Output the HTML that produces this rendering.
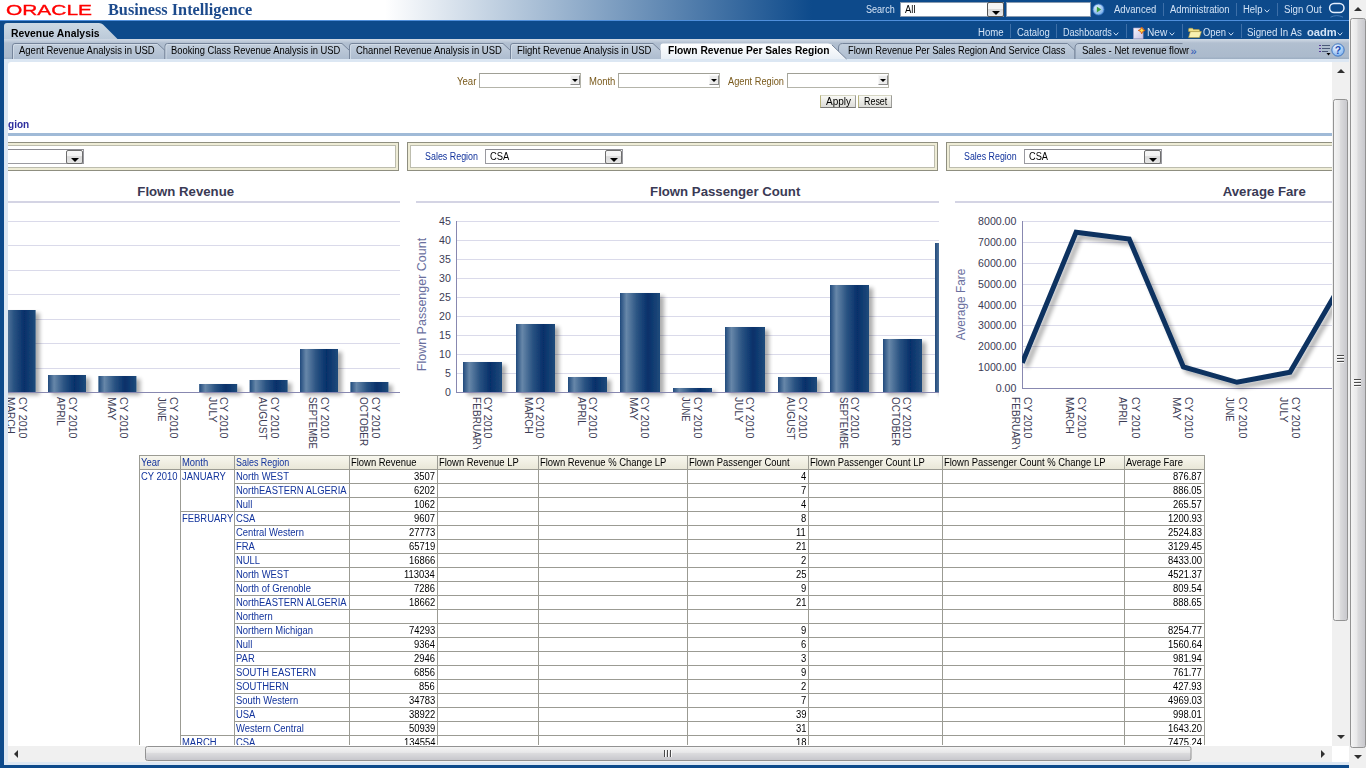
<!DOCTYPE html>
<html><head><meta charset="utf-8"><title>Oracle Business Intelligence</title>
<style>
html,body{margin:0;padding:0;width:1366px;height:768px;overflow:hidden;background:#fff;font:11px "Liberation Sans",sans-serif;}
.t{position:absolute;white-space:pre;transform-origin:0 50%;line-height:normal}
.a{position:absolute}
</style></head><body>
<div class="a" style="left:0;top:0;width:1349px;height:20px;background:linear-gradient(to right,#fff 0,#fff 385px,#0d4a8b 812px)"></div><div class="a" style="left:0;top:20px;width:1349px;height:1px;background:#4f8fdc"></div><div class="a" style="left:0;top:21px;width:1349px;height:18px;background:#0d4a8b"></div><div class="a" style="left:0;top:39px;width:1349px;height:20px;background:linear-gradient(#cfd9e4 0,#c2cedc 10%,#b1bfd0 20%,#abbacc 88%,#9badc1 100%)"></div><div class="a" style="left:0;top:39px;width:4px;height:729px;background:#0d4a8b"></div><div class="a" style="left:0;top:765px;width:1349px;height:3px;background:#0d4a8b"></div><div class="a" style="left:4px;top:59px;width:1345px;height:706px;background:#dce7f3"></div><div class="a" style="left:8px;top:62px;width:1341px;height:700px;background:#fff;border-top-left-radius:3px"></div><span class="t" style='left:6.1px;top:1.7px;font:14.6px "Liberation Sans",sans-serif;color:#f00;transform:scaleX(1.4330);-webkit-text-stroke:0.35px #f00;'>ORACLE</span><span class="t" style='left:108.3px;top:0.5px;font:bold 16px "Liberation Serif",serif;color:#1c4a8c;transform:scaleX(1.0169);'>Business Intelligence</span><span class="t" style='left:865.8px;top:3.8px;font:10px "Liberation Sans",sans-serif;color:#d3e3f6;transform:scaleX(0.9057);'>Search</span><div class="a" style="left:900px;top:2px;width:104px;height:15px;background:#fff;border:1px solid #8a9bb0;box-sizing:border-box"></div><span class="t" style='left:904.5px;top:3.8px;font:10px "Liberation Sans",sans-serif;color:#000;transform:scaleX(0.9430);'>All</span><div class="a" style="left:987px;top:2px;width:17px;height:15px;box-sizing:border-box;border:1px solid #555;border-radius:2px;background:linear-gradient(#f4f4f4 0,#f4f4f4 45%,#d8d8d8 46%,#e8e8e8)"></div><div class="a" style="left:992px;top:11px;width:0;height:0;border-left:4px solid transparent;border-right:4px solid transparent;border-top:4px solid #000"></div><div class="a" style="left:1006px;top:2px;width:85px;height:15px;background:#fff;border:1px solid #8a9bb0;box-sizing:border-box"></div><svg class="a" style="left:1092px;top:3px" width="13" height="13" viewBox="0 0 13 13"><defs><radialGradient id="gg" cx=".4" cy=".35" r=".7"><stop offset="0" stop-color="#e8f4ff"/><stop offset="1" stop-color="#6aa5e6"/></radialGradient></defs><circle cx="6.5" cy="6.5" r="5.6" fill="url(#gg)" stroke="#2f6fc0" stroke-width=".8"/><path d="M4.8 3.4 L9.2 6.5 L4.8 9.6Z" fill="#3aa040"/></svg><span class="t" style='left:1114.0px;top:3.8px;font:10px "Liberation Sans",sans-serif;color:#d3e3f6;transform:scaleX(0.9486);'>Advanced</span><span class="t" style='left:1170.0px;top:3.8px;font:10px "Liberation Sans",sans-serif;color:#d3e3f6;transform:scaleX(0.9391);'>Administration</span><span class="t" style='left:1242.5px;top:3.8px;font:10px "Liberation Sans",sans-serif;color:#d3e3f6;transform:scaleX(0.9476);'>Help</span><span class="t" style='left:1283.5px;top:3.8px;font:10px "Liberation Sans",sans-serif;color:#d3e3f6;transform:scaleX(0.9686);'>Sign Out</span><div class="a" style="left:1162.5px;top:3px;width:1px;height:13px;background:#3d6fa8"></div><div class="a" style="left:1236px;top:3px;width:1px;height:13px;background:#3d6fa8"></div><div class="a" style="left:1277px;top:3px;width:1px;height:13px;background:#3d6fa8"></div><svg class="a" style="left:1264.0px;top:9.4px" width="7" height="5" viewBox="0 0 7 5"><path d="M.7 .6 L3 3.2 L5.3 .6" fill="none" stroke="#c9dcf2" stroke-width="1"/></svg><svg class="a" style="left:1327px;top:1px" width="20" height="19" viewBox="0 0 20 19"><rect x="2.6" y="2.6" width="14.4" height="8.8" rx="4.4" fill="none" stroke="#e6f0ff" stroke-width="1.5"/><path d="M3.5 16.2 Q9.8 13 16 16.2" fill="none" stroke="#5f8fc8" stroke-width="1" opacity=".7"/></svg><span class="t" style='left:977.9px;top:26.8px;font:10px "Liberation Sans",sans-serif;color:#d3e3f6;transform:scaleX(0.9593);'>Home</span><span class="t" style='left:1016.7px;top:26.8px;font:10px "Liberation Sans",sans-serif;color:#d3e3f6;transform:scaleX(0.9516);'>Catalog</span><span class="t" style='left:1062.7px;top:26.8px;font:10px "Liberation Sans",sans-serif;color:#d3e3f6;transform:scaleX(0.9050);'>Dashboards</span><svg class="a" style="left:1113.0px;top:32.4px" width="7" height="5" viewBox="0 0 7 5"><path d="M.7 .6 L3 3.2 L5.3 .6" fill="none" stroke="#c9dcf2" stroke-width="1"/></svg><span class="t" style='left:1146.7px;top:26.8px;font:10px "Liberation Sans",sans-serif;color:#d3e3f6;transform:scaleX(1.0142);'>New</span><svg class="a" style="left:1169.0px;top:32.4px" width="7" height="5" viewBox="0 0 7 5"><path d="M.7 .6 L3 3.2 L5.3 .6" fill="none" stroke="#c9dcf2" stroke-width="1"/></svg><span class="t" style='left:1202.5px;top:26.8px;font:10px "Liberation Sans",sans-serif;color:#d3e3f6;transform:scaleX(0.9400);'>Open</span><svg class="a" style="left:1227.5px;top:32.4px" width="7" height="5" viewBox="0 0 7 5"><path d="M.7 .6 L3 3.2 L5.3 .6" fill="none" stroke="#c9dcf2" stroke-width="1"/></svg><span class="t" style='left:1247.2px;top:26.8px;font:10px "Liberation Sans",sans-serif;color:#d3e3f6;transform:scaleX(0.9758);'>Signed In As</span><span class="t" style='left:1307.2px;top:26.8px;font:bold 10px "Liberation Sans",sans-serif;color:#d3e3f6;transform:scaleX(1.1173);'>oadm</span><svg class="a" style="left:1337.2px;top:32.4px" width="7" height="5" viewBox="0 0 7 5"><path d="M.7 .6 L3 3.2 L5.3 .6" fill="none" stroke="#c9dcf2" stroke-width="1"/></svg><div class="a" style="left:1010px;top:24px;width:1px;height:14px;background:#3d6fa8"></div><div class="a" style="left:1056px;top:24px;width:1px;height:14px;background:#3d6fa8"></div><div class="a" style="left:1126px;top:24px;width:1px;height:14px;background:#3d6fa8"></div><div class="a" style="left:1182px;top:24px;width:1px;height:14px;background:#3d6fa8"></div><div class="a" style="left:1241px;top:24px;width:1px;height:14px;background:#3d6fa8"></div><svg class="a" style="left:1132px;top:26px" width="14" height="14" viewBox="0 0 14 14"><defs><linearGradient id="pg" x1="0" y1="0" x2="1" y2="1"><stop offset="0" stop-color="#f6f4fc"/><stop offset="1" stop-color="#c9c2e2"/></linearGradient></defs><path d="M1.5 2h9.6v10.8h-9.6z" fill="url(#pg)" stroke="#a8a0c8" stroke-width=".6"/><path d="M9.7 1l1.05 2.35 2.35 1.05-2.35 1.05L9.7 7.8 8.65 5.45 6.3 4.4l2.35-1.05z" fill="#ffe24a" stroke="#d2520e" stroke-width=".9" stroke-linejoin="round"/></svg><svg class="a" style="left:1188px;top:27px" width="14" height="12" viewBox="0 0 14 12"><path d="M.6 2.2q0-.9.9-.9h3l1 1.2h5.2q.8 0 .8.8v1.2H.6z" fill="#efe08a" stroke="#b9a040" stroke-width=".6"/><path d="M.6 10.6l1.8-6h11l-2 6z" fill="#f8f0b0" stroke="#b9a040" stroke-width=".6"/></svg><svg class="a" style="left:0;top:21px" width="1349" height="42" viewBox="0 0 1349 42"><defs><linearGradient id="mt" x1="0" y1="0" x2="0" y2="1"><stop offset="0" stop-color="#ccd9e4"/><stop offset="1" stop-color="#bccad9"/></linearGradient><linearGradient id="st" x1="0" y1="0" x2="0" y2="1"><stop offset="0" stop-color="#c3cfdd"/><stop offset="1" stop-color="#adbccf"/></linearGradient><linearGradient id="at" x1="0" y1="0" x2="0" y2="1"><stop offset="0" stop-color="#ffffff"/><stop offset="1" stop-color="#e9eff6"/></linearGradient></defs><path d="M4 18 V5 Q4 2 7 2 H99 Q101.5 2 103 3.5 L117.5 18Z" fill="url(#mt)"/><path d="M12.5 38 V25 Q12.5 22.5 15.0 22.5 H157.5 L165 29.5 V38" fill="url(#st)" stroke="#76859b" stroke-width="1"/><path d="M13.5 38 V25.5 Q13.5 23.5 15.5 23.5 H157" fill="none" stroke="#d5deea" stroke-width="1" opacity=".8"/><path d="M165 38 V25 Q165 22.5 167.5 22.5 H342.0 L349.5 29.5 V38" fill="url(#st)" stroke="#76859b" stroke-width="1"/><path d="M166 38 V25.5 Q166 23.5 168 23.5 H341.5" fill="none" stroke="#d5deea" stroke-width="1" opacity=".8"/><path d="M349.5 38 V25 Q349.5 22.5 352.0 22.5 H503.0 L510.5 29.5 V38" fill="url(#st)" stroke="#76859b" stroke-width="1"/><path d="M350.5 38 V25.5 Q350.5 23.5 352.5 23.5 H502.5" fill="none" stroke="#d5deea" stroke-width="1" opacity=".8"/><path d="M510.5 38 V25 Q510.5 22.5 513.0 22.5 H653.0 L660.5 29.5 V38" fill="url(#st)" stroke="#76859b" stroke-width="1"/><path d="M511.5 38 V25.5 Q511.5 23.5 513.5 23.5 H652.5" fill="none" stroke="#d5deea" stroke-width="1" opacity=".8"/><path d="M838.5 38 V27 Q838.5 22.5 842.5 22.5 H1067.5 L1075 29.5 V38" fill="url(#st)" stroke="#76859b" stroke-width="1"/><path d="M1075 38 V27 Q1075 22.5 1079 22.5 H1182.5" fill="url(#st)" stroke="#76859b" stroke-width="1"/><path d="M660.5 38 V25 Q660.5 22.5 663 22.5 H828 Q830.5 22.5 832 24 L846.5 38Z" fill="url(#at)"/><path d="M832 24 L846.5 38" stroke="#76859b" stroke-width="1" fill="none"/></svg><span class="t" style='left:10.9px;top:27.8px;font:bold 10px "Liberation Sans",sans-serif;color:#000;transform:scaleX(1.0395);'>Revenue Analysis</span><span class="t" style='left:19.3px;top:45.3px;font:10px "Liberation Sans",sans-serif;color:#000;transform:scaleX(0.9499);'>Agent Revenue Analysis in USD</span><span class="t" style='left:170.6px;top:45.3px;font:10px "Liberation Sans",sans-serif;color:#000;transform:scaleX(0.9377);'>Booking Class Revenue Analysis in USD</span><span class="t" style='left:355.7px;top:45.3px;font:10px "Liberation Sans",sans-serif;color:#000;transform:scaleX(0.9468);'>Channel Revenue Analysis in USD</span><span class="t" style='left:517.0px;top:45.3px;font:10px "Liberation Sans",sans-serif;color:#000;transform:scaleX(0.9526);'>Flight Revenue Analysis in USD</span><span class="t" style='left:667.5px;top:45.3px;font:bold 10px "Liberation Sans",sans-serif;color:#000;transform:scaleX(1.0239);'>Flown Revenue Per Sales Region</span><span class="t" style='left:848.1px;top:45.3px;font:10px "Liberation Sans",sans-serif;color:#000;transform:scaleX(0.9290);'>Flown Revenue Per Sales Region And Service Class</span><span class="t" style='left:1081.5px;top:45.3px;font:10px "Liberation Sans",sans-serif;color:#000;transform:scaleX(0.9556);'>Sales - Net revenue flowr</span><span class="t" style='left:1190.5px;top:44.5px;font:11px "Liberation Sans",sans-serif;color:#2a55b5'>»</span><svg class="a" style="left:1319px;top:43px" width="12" height="13" viewBox="0 0 12 13"><g stroke="#4a5a78" stroke-width="1"><path d="M3 2.5h8M3 5.5h8M3 8.5h6"/></g><g fill="#5a3a9a"><rect x="0" y="2" width="2" height="1"/><rect x="0" y="5" width="2" height="1"/><rect x="0" y="8" width="2" height="1"/></g><path d="M7.5 10h4l-2 2.5z" fill="#000"/></svg><svg class="a" style="left:1331px;top:43px" width="14" height="14" viewBox="0 0 14 14"><defs><radialGradient id="hg" cx=".4" cy=".3" r=".8"><stop offset="0" stop-color="#f2f8ff"/><stop offset="1" stop-color="#6fa9ee"/></radialGradient></defs><circle cx="7" cy="7" r="6.2" fill="url(#hg)" stroke="#2b66b8" stroke-width=".8"/><text x="7" y="10.6" text-anchor="middle" font-family="Liberation Sans, sans-serif" font-weight="bold" font-size="10.5" fill="#1b4db3">?</text></svg><div class="a" style="left:8px;top:62px;width:1324px;height:683px;overflow:hidden"><div class="a" style="left:-8px;top:-62px;width:1366px;height:768px"><span class="t" style='left:456.8px;top:75.8px;font:10px "Liberation Sans",sans-serif;color:#7a5a1c;transform:scaleX(0.9595);'>Year</span><div class="a" style="left:479px;top:73px;width:102px;height:15px;box-sizing:border-box;background:#fff;border:1px solid #b4b4aa;border-top-color:#a0a096;border-left-color:#a8a89e"></div><div class="a" style="left:570px;top:75px;width:10px;height:10px;box-sizing:border-box;background:#ececec;border:1px solid #f8f8f8;border-right-color:#8c8c8c;border-bottom-color:#8c8c8c"></div><div class="a" style="left:572px;top:79px;width:0;height:0;border-left:3px solid transparent;border-right:3px solid transparent;border-top:3px solid #000"></div><span class="t" style='left:588.7px;top:75.8px;font:10px "Liberation Sans",sans-serif;color:#7a5a1c;transform:scaleX(0.9497);'>Month</span><div class="a" style="left:618px;top:73px;width:102px;height:15px;box-sizing:border-box;background:#fff;border:1px solid #b4b4aa;border-top-color:#a0a096;border-left-color:#a8a89e"></div><div class="a" style="left:709px;top:75px;width:10px;height:10px;box-sizing:border-box;background:#ececec;border:1px solid #f8f8f8;border-right-color:#8c8c8c;border-bottom-color:#8c8c8c"></div><div class="a" style="left:711px;top:79px;width:0;height:0;border-left:3px solid transparent;border-right:3px solid transparent;border-top:3px solid #000"></div><span class="t" style='left:728.4px;top:75.8px;font:10px "Liberation Sans",sans-serif;color:#7a5a1c;transform:scaleX(0.9239);'>Agent Region</span><div class="a" style="left:787px;top:73px;width:102px;height:15px;box-sizing:border-box;background:#fff;border:1px solid #b4b4aa;border-top-color:#a0a096;border-left-color:#a8a89e"></div><div class="a" style="left:878px;top:75px;width:10px;height:10px;box-sizing:border-box;background:#ececec;border:1px solid #f8f8f8;border-right-color:#8c8c8c;border-bottom-color:#8c8c8c"></div><div class="a" style="left:880px;top:79px;width:0;height:0;border-left:3px solid transparent;border-right:3px solid transparent;border-top:3px solid #000"></div><div class="a" style="left:820px;top:95px;width:36px;height:13px;box-sizing:border-box;background:linear-gradient(#f9f9f5,#dcdcd8);border:1px solid #d6d6c4;border-left-color:#b8b47c;border-right-color:#9c9c98;border-bottom-color:#787876"></div><span class="t" style='left:826.1px;top:95.8px;font:10px "Liberation Sans",sans-serif;color:#000;transform:scaleX(1.0034);'>Apply</span><div class="a" style="left:858px;top:95px;width:34px;height:13px;box-sizing:border-box;background:linear-gradient(#f9f9f5,#dcdcd8);border:1px solid #d6d6c4;border-left-color:#b8b47c;border-right-color:#9c9c98;border-bottom-color:#787876"></div><span class="t" style='left:863.9px;top:95.8px;font:10px "Liberation Sans",sans-serif;color:#000;transform:scaleX(0.8919);'>Reset</span><span class="t" style='left:7.9px;top:118.8px;font:bold 10px "Liberation Sans",sans-serif;color:#2d2d9e;transform:scaleX(1.0043);'>gion</span><div class="a" style="left:8px;top:133px;width:1324px;height:3px;background:#a0bad7"></div><div class="a" style="left:-132px;top:142px;width:531px;height:29px;box-sizing:border-box;background:#fff;border:1px solid #8f8f80;box-shadow:inset 0 0 0 2px #eeecd6, inset 0 0 0 3px #bdbdae"></div><div class="a" style="left:407px;top:142px;width:531px;height:29px;box-sizing:border-box;background:#fff;border:1px solid #8f8f80;box-shadow:inset 0 0 0 2px #eeecd6, inset 0 0 0 3px #bdbdae"></div><div class="a" style="left:946px;top:142px;width:531px;height:29px;box-sizing:border-box;background:#fff;border:1px solid #8f8f80;box-shadow:inset 0 0 0 2px #eeecd6, inset 0 0 0 3px #bdbdae"></div><div class="a" style="left:-54px;top:149px;width:138px;height:15px;box-sizing:border-box;background:#fff;border:1px solid #9a9aa0;border-top-color:#8c8c92"></div><div class="a" style="left:66px;top:150px;width:17px;height:14px;box-sizing:border-box;border:1px solid #6e6e6e;border-radius:2px;background:linear-gradient(#f6f6f6 0,#f2f2f2 45%,#dadada 46%,#e6e6e6)"></div><div class="a" style="left:71px;top:158px;width:0;height:0;border-left:4px solid transparent;border-right:4px solid transparent;border-top:4px solid #000"></div><span class="t" style='left:424.5px;top:151.1px;font:10px "Liberation Sans",sans-serif;color:#12339c;transform:scaleX(0.8910);'>Sales Region</span><div class="a" style="left:485px;top:149px;width:138px;height:15px;box-sizing:border-box;background:#fff;border:1px solid #9a9aa0;border-top-color:#8c8c92"></div><div class="a" style="left:605px;top:150px;width:17px;height:14px;box-sizing:border-box;border:1px solid #6e6e6e;border-radius:2px;background:linear-gradient(#f6f6f6 0,#f2f2f2 45%,#dadada 46%,#e6e6e6)"></div><div class="a" style="left:610px;top:158px;width:0;height:0;border-left:4px solid transparent;border-right:4px solid transparent;border-top:4px solid #000"></div><span class="t" style='left:489.8px;top:151.1px;font:10px "Liberation Sans",sans-serif;color:#000;transform:scaleX(0.9386);'>CSA</span><span class="t" style='left:963.9px;top:151.1px;font:10px "Liberation Sans",sans-serif;color:#12339c;transform:scaleX(0.8843);'>Sales Region</span><div class="a" style="left:1024px;top:149px;width:138px;height:15px;box-sizing:border-box;background:#fff;border:1px solid #9a9aa0;border-top-color:#8c8c92"></div><div class="a" style="left:1144px;top:150px;width:17px;height:14px;box-sizing:border-box;border:1px solid #6e6e6e;border-radius:2px;background:linear-gradient(#f6f6f6 0,#f2f2f2 45%,#dadada 46%,#e6e6e6)"></div><div class="a" style="left:1149px;top:158px;width:0;height:0;border-left:4px solid transparent;border-right:4px solid transparent;border-top:4px solid #000"></div><span class="t" style='left:1029.1px;top:151.1px;font:10px "Liberation Sans",sans-serif;color:#000;transform:scaleX(0.9240);'>CSA</span><svg class="a" style="left:0;top:175px;overflow:hidden" width="1366" height="274" viewBox="0 175 1366 274"><defs><linearGradient id="bg" x1="0" y1="0" x2="1" y2="0"><stop offset="0" stop-color="#1f4a7c"/><stop offset=".16" stop-color="#6787a9"/><stop offset=".42" stop-color="#2b5483"/><stop offset=".7" stop-color="#06306a"/><stop offset="1" stop-color="#1f4b7b"/></linearGradient><filter id="sh" x="-20%" y="-20%" width="160%" height="150%"><feGaussianBlur in="SourceAlpha" stdDeviation="2.2"/><feOffset dx="3.5" dy="3"/><feComponentTransfer><feFuncA type="linear" slope=".33"/></feComponentTransfer><feMerge><feMergeNode/><feMergeNode in="SourceGraphic"/></feMerge></filter><filter id="shl" x="-10%" y="-10%" width="130%" height="130%"><feGaussianBlur in="SourceAlpha" stdDeviation="2.2"/><feOffset dx="4" dy="4"/><feComponentTransfer><feFuncA type="linear" slope=".32"/></feComponentTransfer><feMerge><feMergeNode/><feMergeNode in="SourceGraphic"/></feMerge></filter><clipPath id="c1"><rect x="8" y="175" width="392" height="274"/></clipPath><clipPath id="c2"><rect x="416" y="175" width="523" height="274"/></clipPath><clipPath id="c3"><rect x="955" y="175" width="377" height="274"/></clipPath><clipPath id="p2"><rect x="456" y="215" width="483" height="182"/></clipPath><clipPath id="p3"><rect x="1022" y="215" width="320" height="180"/></clipPath></defs><g clip-path="url(#c1)"><text x="185.7" y="196" text-anchor="middle" font-family="Liberation Sans, sans-serif" font-weight="bold" font-size="13.2" fill="#3a3a55">Flown Revenue</text><rect x="-123" y="201" width="523" height="2" fill="#d4d4e4"/><rect x="0" y="368" width="400" height="1" fill="#dadaea"/><rect x="0" y="343" width="400" height="1" fill="#dadaea"/><rect x="0" y="319" width="400" height="1" fill="#dadaea"/><rect x="0" y="294" width="400" height="1" fill="#dadaea"/><rect x="0" y="270" width="400" height="1" fill="#dadaea"/><rect x="0" y="245" width="400" height="1" fill="#dadaea"/><rect x="0" y="221" width="400" height="1" fill="#dadaea"/><g filter="url(#sh)"><rect x="-2.40" y="310.00" width="38.00" height="82.00" fill="url(#bg)"/><rect x="48.00" y="375.00" width="38.00" height="17.00" fill="url(#bg)"/><rect x="98.40" y="376.00" width="38.00" height="16.00" fill="url(#bg)"/><rect x="199.20" y="384.00" width="38.00" height="8.00" fill="url(#bg)"/><rect x="249.60" y="380.00" width="38.00" height="12.00" fill="url(#bg)"/><rect x="300.00" y="349.00" width="38.00" height="43.00" fill="url(#bg)"/><rect x="350.40" y="382.00" width="38.00" height="10.00" fill="url(#bg)"/></g><rect x="0" y="392" width="400" height="1" fill="#8888b0"/><text transform="translate(18.85,397.1) rotate(90)" font-family="Liberation Sans, sans-serif" font-size="11" textLength="41.4" lengthAdjust="spacingAndGlyphs" fill="#3c3c55">CY 2010</text><text transform="translate(6.95,397.1) rotate(90)" font-family="Liberation Sans, sans-serif" font-size="11" textLength="36.7" lengthAdjust="spacingAndGlyphs" fill="#3c3c55">MARCH</text><text transform="translate(69.25,397.1) rotate(90)" font-family="Liberation Sans, sans-serif" font-size="11" textLength="41.4" lengthAdjust="spacingAndGlyphs" fill="#3c3c55">CY 2010</text><text transform="translate(57.35,397.1) rotate(90)" font-family="Liberation Sans, sans-serif" font-size="11" textLength="28.8" lengthAdjust="spacingAndGlyphs" fill="#3c3c55">APRIL</text><text transform="translate(119.65,397.1) rotate(90)" font-family="Liberation Sans, sans-serif" font-size="11" textLength="41.4" lengthAdjust="spacingAndGlyphs" fill="#3c3c55">CY 2010</text><text transform="translate(107.75,397.1) rotate(90)" font-family="Liberation Sans, sans-serif" font-size="11" textLength="23.5" lengthAdjust="spacingAndGlyphs" fill="#3c3c55">MAY</text><text transform="translate(170.05,397.1) rotate(90)" font-family="Liberation Sans, sans-serif" font-size="11" textLength="41.4" lengthAdjust="spacingAndGlyphs" fill="#3c3c55">CY 2010</text><text transform="translate(158.15,397.1) rotate(90)" font-family="Liberation Sans, sans-serif" font-size="11" textLength="24.4" lengthAdjust="spacingAndGlyphs" fill="#3c3c55">JUNE</text><text transform="translate(220.45,397.1) rotate(90)" font-family="Liberation Sans, sans-serif" font-size="11" textLength="41.4" lengthAdjust="spacingAndGlyphs" fill="#3c3c55">CY 2010</text><text transform="translate(208.55,397.1) rotate(90)" font-family="Liberation Sans, sans-serif" font-size="11" textLength="25.6" lengthAdjust="spacingAndGlyphs" fill="#3c3c55">JULY</text><text transform="translate(270.85,397.1) rotate(90)" font-family="Liberation Sans, sans-serif" font-size="11" textLength="41.4" lengthAdjust="spacingAndGlyphs" fill="#3c3c55">CY 2010</text><text transform="translate(258.95,397.1) rotate(90)" font-family="Liberation Sans, sans-serif" font-size="11" textLength="42.8" lengthAdjust="spacingAndGlyphs" fill="#3c3c55">AUGUST</text><text transform="translate(321.25,397.1) rotate(90)" font-family="Liberation Sans, sans-serif" font-size="11" textLength="41.4" lengthAdjust="spacingAndGlyphs" fill="#3c3c55">CY 2010</text><text transform="translate(309.35,397.1) rotate(90)" font-family="Liberation Sans, sans-serif" font-size="11" textLength="51.6" lengthAdjust="spacingAndGlyphs" fill="#3c3c55">SEPTEMBE</text><text transform="translate(371.65,397.1) rotate(90)" font-family="Liberation Sans, sans-serif" font-size="11" textLength="41.4" lengthAdjust="spacingAndGlyphs" fill="#3c3c55">CY 2010</text><text transform="translate(359.75,397.1) rotate(90)" font-family="Liberation Sans, sans-serif" font-size="11" textLength="49" lengthAdjust="spacingAndGlyphs" fill="#3c3c55">OCTOBER</text></g><g clip-path="url(#c2)"><text x="725.2" y="196" text-anchor="middle" font-family="Liberation Sans, sans-serif" font-weight="bold" font-size="13.2" fill="#3a3a55">Flown Passenger Count</text><rect x="416" y="201" width="523" height="2" fill="#d4d4e4"/><text x="450.8" y="395.70" text-anchor="end" font-family="Liberation Sans, sans-serif" font-size="10.6" fill="#3c3c55">0</text><rect x="456" y="373" width="500" height="1" fill="#dadaea"/><text x="450.8" y="376.70" text-anchor="end" font-family="Liberation Sans, sans-serif" font-size="10.6" fill="#3c3c55">5</text><rect x="456" y="354" width="500" height="1" fill="#dadaea"/><text x="450.8" y="357.70" text-anchor="end" font-family="Liberation Sans, sans-serif" font-size="10.6" fill="#3c3c55">10</text><rect x="456" y="335" width="500" height="1" fill="#dadaea"/><text x="450.8" y="338.70" text-anchor="end" font-family="Liberation Sans, sans-serif" font-size="10.6" fill="#3c3c55">15</text><rect x="456" y="316" width="500" height="1" fill="#dadaea"/><text x="450.8" y="319.70" text-anchor="end" font-family="Liberation Sans, sans-serif" font-size="10.6" fill="#3c3c55">20</text><rect x="456" y="297" width="500" height="1" fill="#dadaea"/><text x="450.8" y="300.70" text-anchor="end" font-family="Liberation Sans, sans-serif" font-size="10.6" fill="#3c3c55">25</text><rect x="456" y="278" width="500" height="1" fill="#dadaea"/><text x="450.8" y="281.70" text-anchor="end" font-family="Liberation Sans, sans-serif" font-size="10.6" fill="#3c3c55">30</text><rect x="456" y="259" width="500" height="1" fill="#dadaea"/><text x="450.8" y="262.70" text-anchor="end" font-family="Liberation Sans, sans-serif" font-size="10.6" fill="#3c3c55">35</text><rect x="456" y="240" width="500" height="1" fill="#dadaea"/><text x="450.8" y="243.70" text-anchor="end" font-family="Liberation Sans, sans-serif" font-size="10.6" fill="#3c3c55">40</text><rect x="456" y="221" width="500" height="1" fill="#dadaea"/><text x="450.8" y="224.70" text-anchor="end" font-family="Liberation Sans, sans-serif" font-size="10.6" fill="#3c3c55">45</text><text transform="translate(425.6,304.5) rotate(-90)" text-anchor="middle" font-family="Liberation Sans, sans-serif" font-size="12.5" fill="#6a6f9e">Flown Passenger Count</text><g filter="url(#sh)"><rect x="463.00" y="362.00" width="39.00" height="30.00" fill="url(#bg)"/><rect x="516.00" y="324.00" width="39.00" height="68.00" fill="url(#bg)"/><rect x="568.00" y="377.00" width="39.00" height="15.00" fill="url(#bg)"/><rect x="620.00" y="293.00" width="40.00" height="99.00" fill="url(#bg)"/><rect x="673.00" y="388.00" width="39.00" height="4.00" fill="url(#bg)"/><rect x="725.00" y="327.00" width="40.00" height="65.00" fill="url(#bg)"/><rect x="778.00" y="377.00" width="39.00" height="15.00" fill="url(#bg)"/><rect x="830.00" y="285.00" width="39.00" height="107.00" fill="url(#bg)"/><rect x="883.00" y="339.00" width="39.00" height="53.00" fill="url(#bg)"/><rect x="935.00" y="243.00" width="39.00" height="149.00" fill="url(#bg)"/></g><rect x="456" y="221" width="1" height="172" fill="#8888b0"/><rect x="456" y="392" width="500" height="1" fill="#8888b0"/><text transform="translate(483.85,397.1) rotate(90)" font-family="Liberation Sans, sans-serif" font-size="11" textLength="41.4" lengthAdjust="spacingAndGlyphs" fill="#3c3c55">CY 2010</text><text transform="translate(472.65,397.1) rotate(90)" font-family="Liberation Sans, sans-serif" font-size="11" textLength="54.5" lengthAdjust="spacingAndGlyphs" fill="#3c3c55">FEBRUARY</text><text transform="translate(536.30,397.1) rotate(90)" font-family="Liberation Sans, sans-serif" font-size="11" textLength="41.4" lengthAdjust="spacingAndGlyphs" fill="#3c3c55">CY 2010</text><text transform="translate(525.10,397.1) rotate(90)" font-family="Liberation Sans, sans-serif" font-size="11" textLength="36.7" lengthAdjust="spacingAndGlyphs" fill="#3c3c55">MARCH</text><text transform="translate(588.75,397.1) rotate(90)" font-family="Liberation Sans, sans-serif" font-size="11" textLength="41.4" lengthAdjust="spacingAndGlyphs" fill="#3c3c55">CY 2010</text><text transform="translate(577.55,397.1) rotate(90)" font-family="Liberation Sans, sans-serif" font-size="11" textLength="28.8" lengthAdjust="spacingAndGlyphs" fill="#3c3c55">APRIL</text><text transform="translate(641.20,397.1) rotate(90)" font-family="Liberation Sans, sans-serif" font-size="11" textLength="41.4" lengthAdjust="spacingAndGlyphs" fill="#3c3c55">CY 2010</text><text transform="translate(630.00,397.1) rotate(90)" font-family="Liberation Sans, sans-serif" font-size="11" textLength="23.5" lengthAdjust="spacingAndGlyphs" fill="#3c3c55">MAY</text><text transform="translate(693.65,397.1) rotate(90)" font-family="Liberation Sans, sans-serif" font-size="11" textLength="41.4" lengthAdjust="spacingAndGlyphs" fill="#3c3c55">CY 2010</text><text transform="translate(682.45,397.1) rotate(90)" font-family="Liberation Sans, sans-serif" font-size="11" textLength="24.4" lengthAdjust="spacingAndGlyphs" fill="#3c3c55">JUNE</text><text transform="translate(746.10,397.1) rotate(90)" font-family="Liberation Sans, sans-serif" font-size="11" textLength="41.4" lengthAdjust="spacingAndGlyphs" fill="#3c3c55">CY 2010</text><text transform="translate(734.90,397.1) rotate(90)" font-family="Liberation Sans, sans-serif" font-size="11" textLength="25.6" lengthAdjust="spacingAndGlyphs" fill="#3c3c55">JULY</text><text transform="translate(798.55,397.1) rotate(90)" font-family="Liberation Sans, sans-serif" font-size="11" textLength="41.4" lengthAdjust="spacingAndGlyphs" fill="#3c3c55">CY 2010</text><text transform="translate(787.35,397.1) rotate(90)" font-family="Liberation Sans, sans-serif" font-size="11" textLength="42.8" lengthAdjust="spacingAndGlyphs" fill="#3c3c55">AUGUST</text><text transform="translate(851.00,397.1) rotate(90)" font-family="Liberation Sans, sans-serif" font-size="11" textLength="41.4" lengthAdjust="spacingAndGlyphs" fill="#3c3c55">CY 2010</text><text transform="translate(839.80,397.1) rotate(90)" font-family="Liberation Sans, sans-serif" font-size="11" textLength="51.6" lengthAdjust="spacingAndGlyphs" fill="#3c3c55">SEPTEMBE</text><text transform="translate(903.45,397.1) rotate(90)" font-family="Liberation Sans, sans-serif" font-size="11" textLength="41.4" lengthAdjust="spacingAndGlyphs" fill="#3c3c55">CY 2010</text><text transform="translate(892.25,397.1) rotate(90)" font-family="Liberation Sans, sans-serif" font-size="11" textLength="49" lengthAdjust="spacingAndGlyphs" fill="#3c3c55">OCTOBER</text><text transform="translate(955.90,397.1) rotate(90)" font-family="Liberation Sans, sans-serif" font-size="11" textLength="41.4" lengthAdjust="spacingAndGlyphs" fill="#3c3c55">CY 2010</text><text transform="translate(944.70,397.1) rotate(90)" font-family="Liberation Sans, sans-serif" font-size="11" textLength="56" lengthAdjust="spacingAndGlyphs" fill="#3c3c55">NOVEMBER</text></g><g clip-path="url(#c3)"><text x="1264.3" y="196" text-anchor="middle" font-family="Liberation Sans, sans-serif" font-weight="bold" font-size="13.2" fill="#3a3a55">Average Fare</text><rect x="955" y="201" width="523" height="2" fill="#d4d4e4"/><text x="1016.4" y="391.70" text-anchor="end" font-family="Liberation Sans, sans-serif" font-size="10.6" fill="#3c3c55">0.00</text><rect x="1022" y="367" width="400" height="1" fill="#dadaea"/><text x="1016.4" y="370.70" text-anchor="end" font-family="Liberation Sans, sans-serif" font-size="10.6" fill="#3c3c55">1000.00</text><rect x="1022" y="346" width="400" height="1" fill="#dadaea"/><text x="1016.4" y="349.70" text-anchor="end" font-family="Liberation Sans, sans-serif" font-size="10.6" fill="#3c3c55">2000.00</text><rect x="1022" y="325" width="400" height="1" fill="#dadaea"/><text x="1016.4" y="328.70" text-anchor="end" font-family="Liberation Sans, sans-serif" font-size="10.6" fill="#3c3c55">3000.00</text><rect x="1022" y="305" width="400" height="1" fill="#dadaea"/><text x="1016.4" y="308.70" text-anchor="end" font-family="Liberation Sans, sans-serif" font-size="10.6" fill="#3c3c55">4000.00</text><rect x="1022" y="284" width="400" height="1" fill="#dadaea"/><text x="1016.4" y="287.70" text-anchor="end" font-family="Liberation Sans, sans-serif" font-size="10.6" fill="#3c3c55">5000.00</text><rect x="1022" y="263" width="400" height="1" fill="#dadaea"/><text x="1016.4" y="266.70" text-anchor="end" font-family="Liberation Sans, sans-serif" font-size="10.6" fill="#3c3c55">6000.00</text><rect x="1022" y="242" width="400" height="1" fill="#dadaea"/><text x="1016.4" y="245.70" text-anchor="end" font-family="Liberation Sans, sans-serif" font-size="10.6" fill="#3c3c55">7000.00</text><rect x="1022" y="221" width="400" height="1" fill="#dadaea"/><text x="1016.4" y="224.70" text-anchor="end" font-family="Liberation Sans, sans-serif" font-size="10.6" fill="#3c3c55">8000.00</text><text transform="translate(965.2,304.5) rotate(-90)" text-anchor="middle" font-family="Liberation Sans, sans-serif" font-size="12.5" textLength="71.6" lengthAdjust="spacingAndGlyphs" fill="#6a6f9e">Average Fare</text><rect x="1022" y="221" width="1" height="168" fill="#8888b0"/><rect x="1022" y="388" width="400" height="1" fill="#8888b0"/><g clip-path="url(#p3)"><polyline filter="url(#shl)" fill="none" stroke="#0b3160" stroke-width="5" stroke-linejoin="miter" points="1022.3,362.8 1076.1,232.3 1129.2,239 1183.4,367 1237,382.3 1290,372.3 1343.6,280"/></g><text transform="translate(1024.35,397.1) rotate(90)" font-family="Liberation Sans, sans-serif" font-size="11" textLength="41.4" lengthAdjust="spacingAndGlyphs" fill="#3c3c55">CY 2010</text><text transform="translate(1011.95,397.1) rotate(90)" font-family="Liberation Sans, sans-serif" font-size="11" textLength="54.5" lengthAdjust="spacingAndGlyphs" fill="#3c3c55">FEBRUARY</text><text transform="translate(1077.95,397.1) rotate(90)" font-family="Liberation Sans, sans-serif" font-size="11" textLength="41.4" lengthAdjust="spacingAndGlyphs" fill="#3c3c55">CY 2010</text><text transform="translate(1065.55,397.1) rotate(90)" font-family="Liberation Sans, sans-serif" font-size="11" textLength="36.7" lengthAdjust="spacingAndGlyphs" fill="#3c3c55">MARCH</text><text transform="translate(1131.55,397.1) rotate(90)" font-family="Liberation Sans, sans-serif" font-size="11" textLength="41.4" lengthAdjust="spacingAndGlyphs" fill="#3c3c55">CY 2010</text><text transform="translate(1119.15,397.1) rotate(90)" font-family="Liberation Sans, sans-serif" font-size="11" textLength="28.8" lengthAdjust="spacingAndGlyphs" fill="#3c3c55">APRIL</text><text transform="translate(1185.15,397.1) rotate(90)" font-family="Liberation Sans, sans-serif" font-size="11" textLength="41.4" lengthAdjust="spacingAndGlyphs" fill="#3c3c55">CY 2010</text><text transform="translate(1172.75,397.1) rotate(90)" font-family="Liberation Sans, sans-serif" font-size="11" textLength="23.5" lengthAdjust="spacingAndGlyphs" fill="#3c3c55">MAY</text><text transform="translate(1238.75,397.1) rotate(90)" font-family="Liberation Sans, sans-serif" font-size="11" textLength="41.4" lengthAdjust="spacingAndGlyphs" fill="#3c3c55">CY 2010</text><text transform="translate(1226.35,397.1) rotate(90)" font-family="Liberation Sans, sans-serif" font-size="11" textLength="24.4" lengthAdjust="spacingAndGlyphs" fill="#3c3c55">JUNE</text><text transform="translate(1292.35,397.1) rotate(90)" font-family="Liberation Sans, sans-serif" font-size="11" textLength="41.4" lengthAdjust="spacingAndGlyphs" fill="#3c3c55">CY 2010</text><text transform="translate(1279.95,397.1) rotate(90)" font-family="Liberation Sans, sans-serif" font-size="11" textLength="25.6" lengthAdjust="spacingAndGlyphs" fill="#3c3c55">JULY</text><text transform="translate(1345.95,397.1) rotate(90)" font-family="Liberation Sans, sans-serif" font-size="11" textLength="41.4" lengthAdjust="spacingAndGlyphs" fill="#3c3c55">CY 2010</text><text transform="translate(1333.55,397.1) rotate(90)" font-family="Liberation Sans, sans-serif" font-size="11" textLength="42.8" lengthAdjust="spacingAndGlyphs" fill="#3c3c55">AUGUST</text></g></svg><div class="a" style="left:140px;top:456px;width:1064px;height:13px;background:linear-gradient(#f8f7ee,#e9e7d8)"></div><div class="a" style="left:139px;top:455px;width:1px;height:308px;background:#9b9b93"></div><div class="a" style="left:180px;top:455px;width:1px;height:308px;background:#9b9b93"></div><div class="a" style="left:234px;top:455px;width:1px;height:308px;background:#9b9b93"></div><div class="a" style="left:349px;top:455px;width:1px;height:308px;background:#9b9b93"></div><div class="a" style="left:437px;top:455px;width:1px;height:308px;background:#9b9b93"></div><div class="a" style="left:538px;top:455px;width:1px;height:308px;background:#9b9b93"></div><div class="a" style="left:687px;top:455px;width:1px;height:308px;background:#9b9b93"></div><div class="a" style="left:808px;top:455px;width:1px;height:308px;background:#9b9b93"></div><div class="a" style="left:942px;top:455px;width:1px;height:308px;background:#9b9b93"></div><div class="a" style="left:1124px;top:455px;width:1px;height:308px;background:#9b9b93"></div><div class="a" style="left:1204px;top:455px;width:1px;height:308px;background:#9b9b93"></div><div class="a" style="left:139px;top:455px;width:1066px;height:1px;background:#9b9b93"></div><div class="a" style="left:139px;top:469px;width:1066px;height:1px;background:#9b9b93"></div><div class="a" style="left:234px;top:483px;width:971px;height:1px;background:#9b9b93"></div><div class="a" style="left:234px;top:497px;width:971px;height:1px;background:#9b9b93"></div><div class="a" style="left:180px;top:511px;width:1025px;height:1px;background:#9b9b93"></div><div class="a" style="left:234px;top:525px;width:971px;height:1px;background:#9b9b93"></div><div class="a" style="left:234px;top:539px;width:971px;height:1px;background:#9b9b93"></div><div class="a" style="left:234px;top:553px;width:971px;height:1px;background:#9b9b93"></div><div class="a" style="left:234px;top:567px;width:971px;height:1px;background:#9b9b93"></div><div class="a" style="left:234px;top:581px;width:971px;height:1px;background:#9b9b93"></div><div class="a" style="left:234px;top:595px;width:971px;height:1px;background:#9b9b93"></div><div class="a" style="left:234px;top:609px;width:971px;height:1px;background:#9b9b93"></div><div class="a" style="left:234px;top:623px;width:971px;height:1px;background:#9b9b93"></div><div class="a" style="left:234px;top:637px;width:971px;height:1px;background:#9b9b93"></div><div class="a" style="left:234px;top:651px;width:971px;height:1px;background:#9b9b93"></div><div class="a" style="left:234px;top:665px;width:971px;height:1px;background:#9b9b93"></div><div class="a" style="left:234px;top:679px;width:971px;height:1px;background:#9b9b93"></div><div class="a" style="left:234px;top:693px;width:971px;height:1px;background:#9b9b93"></div><div class="a" style="left:234px;top:707px;width:971px;height:1px;background:#9b9b93"></div><div class="a" style="left:234px;top:721px;width:971px;height:1px;background:#9b9b93"></div><div class="a" style="left:180px;top:735px;width:1025px;height:1px;background:#9b9b93"></div><div class="a" style="left:234px;top:749px;width:971px;height:1px;background:#9b9b93"></div><div class="a" style="left:234px;top:763px;width:971px;height:1px;background:#9b9b93"></div><span class="t" style='left:141.1px;top:457.0px;font:10px "Liberation Sans",sans-serif;color:#12339c;transform:scaleX(0.9430);'>Year</span><span class="t" style='left:182.1px;top:457.0px;font:10px "Liberation Sans",sans-serif;color:#12339c;transform:scaleX(0.9430);'>Month</span><span class="t" style='left:236.1px;top:457.0px;font:10px "Liberation Sans",sans-serif;color:#12339c;transform:scaleX(0.8950);'>Sales Region</span><span class="t" style='left:351.1px;top:457.0px;font:10px "Liberation Sans",sans-serif;color:#000;transform:scaleX(0.9430);'>Flown Revenue</span><span class="t" style='left:439.1px;top:457.0px;font:10px "Liberation Sans",sans-serif;color:#000;transform:scaleX(0.9430);'>Flown Revenue LP</span><span class="t" style='left:540.1px;top:457.0px;font:10px "Liberation Sans",sans-serif;color:#000;transform:scaleX(0.9430);'>Flown Revenue % Change LP</span><span class="t" style='left:689.1px;top:457.0px;font:10px "Liberation Sans",sans-serif;color:#000;transform:scaleX(0.9430);'>Flown Passenger Count</span><span class="t" style='left:810.1px;top:457.0px;font:10px "Liberation Sans",sans-serif;color:#000;transform:scaleX(0.9430);'>Flown Passenger Count LP</span><span class="t" style='left:944.1px;top:457.0px;font:10px "Liberation Sans",sans-serif;color:#000;transform:scaleX(0.9430);'>Flown Passenger Count % Change LP</span><span class="t" style='left:1126.1px;top:457.0px;font:10px "Liberation Sans",sans-serif;color:#000;transform:scaleX(0.9430);'>Average Fare</span><span class="t" style='left:141.1px;top:470.8px;font:10px "Liberation Sans",sans-serif;color:#12339c;transform:scaleX(0.9430);'>CY 2010</span><span class="t" style='left:182.1px;top:470.8px;font:10px "Liberation Sans",sans-serif;color:#12339c;transform:scaleX(0.9430);'>JANUARY</span><span class="t" style='left:236.1px;top:470.8px;font:10px "Liberation Sans",sans-serif;color:#12339c;transform:scaleX(0.9430);'>North WEST</span><span class="t" style='left:414.1px;top:470.8px;font:10px "Liberation Sans",sans-serif;color:#000;transform:scaleX(0.9430);'>3507</span><span class="t" style='left:800.9px;top:470.8px;font:10px "Liberation Sans",sans-serif;color:#000;transform:scaleX(0.9430);'>4</span><span class="t" style='left:1173.3px;top:470.8px;font:10px "Liberation Sans",sans-serif;color:#000;transform:scaleX(0.9430);'>876.87</span><span class="t" style='left:236.1px;top:484.8px;font:10px "Liberation Sans",sans-serif;color:#12339c;transform:scaleX(0.9430);'>NorthEASTERN ALGERIA</span><span class="t" style='left:414.1px;top:484.8px;font:10px "Liberation Sans",sans-serif;color:#000;transform:scaleX(0.9430);'>6202</span><span class="t" style='left:800.9px;top:484.8px;font:10px "Liberation Sans",sans-serif;color:#000;transform:scaleX(0.9430);'>7</span><span class="t" style='left:1173.3px;top:484.8px;font:10px "Liberation Sans",sans-serif;color:#000;transform:scaleX(0.9430);'>886.05</span><span class="t" style='left:236.1px;top:498.8px;font:10px "Liberation Sans",sans-serif;color:#12339c;transform:scaleX(0.9430);'>Null</span><span class="t" style='left:414.1px;top:498.8px;font:10px "Liberation Sans",sans-serif;color:#000;transform:scaleX(0.9430);'>1062</span><span class="t" style='left:800.9px;top:498.8px;font:10px "Liberation Sans",sans-serif;color:#000;transform:scaleX(0.9430);'>4</span><span class="t" style='left:1173.3px;top:498.8px;font:10px "Liberation Sans",sans-serif;color:#000;transform:scaleX(0.9430);'>265.57</span><span class="t" style='left:182.1px;top:512.8px;font:10px "Liberation Sans",sans-serif;color:#12339c;transform:scaleX(0.9430);'>FEBRUARY</span><span class="t" style='left:236.1px;top:512.8px;font:10px "Liberation Sans",sans-serif;color:#12339c;transform:scaleX(0.9430);'>CSA</span><span class="t" style='left:414.1px;top:512.8px;font:10px "Liberation Sans",sans-serif;color:#000;transform:scaleX(0.9430);'>9607</span><span class="t" style='left:800.9px;top:512.8px;font:10px "Liberation Sans",sans-serif;color:#000;transform:scaleX(0.9430);'>8</span><span class="t" style='left:1168.0px;top:512.8px;font:10px "Liberation Sans",sans-serif;color:#000;transform:scaleX(0.9430);'>1200.93</span><span class="t" style='left:236.1px;top:526.8px;font:10px "Liberation Sans",sans-serif;color:#12339c;transform:scaleX(0.9430);'>Central Western</span><span class="t" style='left:408.9px;top:526.8px;font:10px "Liberation Sans",sans-serif;color:#000;transform:scaleX(0.9430);'>27773</span><span class="t" style='left:796.3px;top:526.8px;font:10px "Liberation Sans",sans-serif;color:#000;transform:scaleX(0.9430);'>11</span><span class="t" style='left:1168.0px;top:526.8px;font:10px "Liberation Sans",sans-serif;color:#000;transform:scaleX(0.9430);'>2524.83</span><span class="t" style='left:236.1px;top:540.8px;font:10px "Liberation Sans",sans-serif;color:#12339c;transform:scaleX(0.9430);'>FRA</span><span class="t" style='left:408.9px;top:540.8px;font:10px "Liberation Sans",sans-serif;color:#000;transform:scaleX(0.9430);'>65719</span><span class="t" style='left:795.6px;top:540.8px;font:10px "Liberation Sans",sans-serif;color:#000;transform:scaleX(0.9430);'>21</span><span class="t" style='left:1168.0px;top:540.8px;font:10px "Liberation Sans",sans-serif;color:#000;transform:scaleX(0.9430);'>3129.45</span><span class="t" style='left:236.1px;top:554.8px;font:10px "Liberation Sans",sans-serif;color:#12339c;transform:scaleX(0.9430);'>NULL</span><span class="t" style='left:408.9px;top:554.8px;font:10px "Liberation Sans",sans-serif;color:#000;transform:scaleX(0.9430);'>16866</span><span class="t" style='left:800.9px;top:554.8px;font:10px "Liberation Sans",sans-serif;color:#000;transform:scaleX(0.9430);'>2</span><span class="t" style='left:1168.0px;top:554.8px;font:10px "Liberation Sans",sans-serif;color:#000;transform:scaleX(0.9430);'>8433.00</span><span class="t" style='left:236.1px;top:568.8px;font:10px "Liberation Sans",sans-serif;color:#12339c;transform:scaleX(0.9430);'>North WEST</span><span class="t" style='left:404.3px;top:568.8px;font:10px "Liberation Sans",sans-serif;color:#000;transform:scaleX(0.9430);'>113034</span><span class="t" style='left:795.6px;top:568.8px;font:10px "Liberation Sans",sans-serif;color:#000;transform:scaleX(0.9430);'>25</span><span class="t" style='left:1168.0px;top:568.8px;font:10px "Liberation Sans",sans-serif;color:#000;transform:scaleX(0.9430);'>4521.37</span><span class="t" style='left:236.1px;top:582.8px;font:10px "Liberation Sans",sans-serif;color:#12339c;transform:scaleX(0.9430);'>North of Grenoble</span><span class="t" style='left:414.1px;top:582.8px;font:10px "Liberation Sans",sans-serif;color:#000;transform:scaleX(0.9430);'>7286</span><span class="t" style='left:800.9px;top:582.8px;font:10px "Liberation Sans",sans-serif;color:#000;transform:scaleX(0.9430);'>9</span><span class="t" style='left:1173.3px;top:582.8px;font:10px "Liberation Sans",sans-serif;color:#000;transform:scaleX(0.9430);'>809.54</span><span class="t" style='left:236.1px;top:596.8px;font:10px "Liberation Sans",sans-serif;color:#12339c;transform:scaleX(0.9430);'>NorthEASTERN ALGERIA</span><span class="t" style='left:408.9px;top:596.8px;font:10px "Liberation Sans",sans-serif;color:#000;transform:scaleX(0.9430);'>18662</span><span class="t" style='left:795.6px;top:596.8px;font:10px "Liberation Sans",sans-serif;color:#000;transform:scaleX(0.9430);'>21</span><span class="t" style='left:1173.3px;top:596.8px;font:10px "Liberation Sans",sans-serif;color:#000;transform:scaleX(0.9430);'>888.65</span><span class="t" style='left:236.1px;top:610.8px;font:10px "Liberation Sans",sans-serif;color:#12339c;transform:scaleX(0.9430);'>Northern</span><span class="t" style='left:236.1px;top:624.8px;font:10px "Liberation Sans",sans-serif;color:#12339c;transform:scaleX(0.9430);'>Northern Michigan</span><span class="t" style='left:408.9px;top:624.8px;font:10px "Liberation Sans",sans-serif;color:#000;transform:scaleX(0.9430);'>74293</span><span class="t" style='left:800.9px;top:624.8px;font:10px "Liberation Sans",sans-serif;color:#000;transform:scaleX(0.9430);'>9</span><span class="t" style='left:1168.0px;top:624.8px;font:10px "Liberation Sans",sans-serif;color:#000;transform:scaleX(0.9430);'>8254.77</span><span class="t" style='left:236.1px;top:638.8px;font:10px "Liberation Sans",sans-serif;color:#12339c;transform:scaleX(0.9430);'>Null</span><span class="t" style='left:414.1px;top:638.8px;font:10px "Liberation Sans",sans-serif;color:#000;transform:scaleX(0.9430);'>9364</span><span class="t" style='left:800.9px;top:638.8px;font:10px "Liberation Sans",sans-serif;color:#000;transform:scaleX(0.9430);'>6</span><span class="t" style='left:1168.0px;top:638.8px;font:10px "Liberation Sans",sans-serif;color:#000;transform:scaleX(0.9430);'>1560.64</span><span class="t" style='left:236.1px;top:652.8px;font:10px "Liberation Sans",sans-serif;color:#12339c;transform:scaleX(0.9430);'>PAR</span><span class="t" style='left:414.1px;top:652.8px;font:10px "Liberation Sans",sans-serif;color:#000;transform:scaleX(0.9430);'>2946</span><span class="t" style='left:800.9px;top:652.8px;font:10px "Liberation Sans",sans-serif;color:#000;transform:scaleX(0.9430);'>3</span><span class="t" style='left:1173.3px;top:652.8px;font:10px "Liberation Sans",sans-serif;color:#000;transform:scaleX(0.9430);'>981.94</span><span class="t" style='left:236.1px;top:666.8px;font:10px "Liberation Sans",sans-serif;color:#12339c;transform:scaleX(0.9430);'>SOUTH EASTERN</span><span class="t" style='left:414.1px;top:666.8px;font:10px "Liberation Sans",sans-serif;color:#000;transform:scaleX(0.9430);'>6856</span><span class="t" style='left:800.9px;top:666.8px;font:10px "Liberation Sans",sans-serif;color:#000;transform:scaleX(0.9430);'>9</span><span class="t" style='left:1173.3px;top:666.8px;font:10px "Liberation Sans",sans-serif;color:#000;transform:scaleX(0.9430);'>761.77</span><span class="t" style='left:236.1px;top:680.8px;font:10px "Liberation Sans",sans-serif;color:#12339c;transform:scaleX(0.9430);'>SOUTHERN</span><span class="t" style='left:419.4px;top:680.8px;font:10px "Liberation Sans",sans-serif;color:#000;transform:scaleX(0.9430);'>856</span><span class="t" style='left:800.9px;top:680.8px;font:10px "Liberation Sans",sans-serif;color:#000;transform:scaleX(0.9430);'>2</span><span class="t" style='left:1173.3px;top:680.8px;font:10px "Liberation Sans",sans-serif;color:#000;transform:scaleX(0.9430);'>427.93</span><span class="t" style='left:236.1px;top:694.8px;font:10px "Liberation Sans",sans-serif;color:#12339c;transform:scaleX(0.9430);'>South Western</span><span class="t" style='left:408.9px;top:694.8px;font:10px "Liberation Sans",sans-serif;color:#000;transform:scaleX(0.9430);'>34783</span><span class="t" style='left:800.9px;top:694.8px;font:10px "Liberation Sans",sans-serif;color:#000;transform:scaleX(0.9430);'>7</span><span class="t" style='left:1168.0px;top:694.8px;font:10px "Liberation Sans",sans-serif;color:#000;transform:scaleX(0.9430);'>4969.03</span><span class="t" style='left:236.1px;top:708.8px;font:10px "Liberation Sans",sans-serif;color:#12339c;transform:scaleX(0.9430);'>USA</span><span class="t" style='left:408.9px;top:708.8px;font:10px "Liberation Sans",sans-serif;color:#000;transform:scaleX(0.9430);'>38922</span><span class="t" style='left:795.6px;top:708.8px;font:10px "Liberation Sans",sans-serif;color:#000;transform:scaleX(0.9430);'>39</span><span class="t" style='left:1173.3px;top:708.8px;font:10px "Liberation Sans",sans-serif;color:#000;transform:scaleX(0.9430);'>998.01</span><span class="t" style='left:236.1px;top:722.8px;font:10px "Liberation Sans",sans-serif;color:#12339c;transform:scaleX(0.9430);'>Western Central</span><span class="t" style='left:408.9px;top:722.8px;font:10px "Liberation Sans",sans-serif;color:#000;transform:scaleX(0.9430);'>50939</span><span class="t" style='left:795.6px;top:722.8px;font:10px "Liberation Sans",sans-serif;color:#000;transform:scaleX(0.9430);'>31</span><span class="t" style='left:1168.0px;top:722.8px;font:10px "Liberation Sans",sans-serif;color:#000;transform:scaleX(0.9430);'>1643.20</span><span class="t" style='left:182.1px;top:736.8px;font:10px "Liberation Sans",sans-serif;color:#12339c;transform:scaleX(0.9430);'>MARCH</span><span class="t" style='left:236.1px;top:736.8px;font:10px "Liberation Sans",sans-serif;color:#12339c;transform:scaleX(0.9430);'>CSA</span><span class="t" style='left:403.6px;top:736.8px;font:10px "Liberation Sans",sans-serif;color:#000;transform:scaleX(0.9430);'>134554</span><span class="t" style='left:795.6px;top:736.8px;font:10px "Liberation Sans",sans-serif;color:#000;transform:scaleX(0.9430);'>18</span><span class="t" style='left:1168.0px;top:736.8px;font:10px "Liberation Sans",sans-serif;color:#000;transform:scaleX(0.9430);'>7475.24</span><span class="t" style='left:236.1px;top:750.8px;font:10px "Liberation Sans",sans-serif;color:#12339c;transform:scaleX(0.9430);'>Central Western</span><span class="t" style='left:408.9px;top:750.8px;font:10px "Liberation Sans",sans-serif;color:#000;transform:scaleX(0.9430);'>61040</span><span class="t" style='left:795.6px;top:750.8px;font:10px "Liberation Sans",sans-serif;color:#000;transform:scaleX(0.9430);'>12</span><span class="t" style='left:1168.0px;top:750.8px;font:10px "Liberation Sans",sans-serif;color:#000;transform:scaleX(0.9430);'>5086.67</span></div></div><svg class="a" style="left:0;top:0" width="1366" height="768" viewBox="0 0 1366 768"><defs><linearGradient id="vt" x1="0" y1="0" x2="1" y2="0"><stop offset="0" stop-color="#f5f5f5"/><stop offset=".42" stop-color="#e8e8e9"/><stop offset=".5" stop-color="#dbdbdd"/><stop offset="1" stop-color="#c6c6cb"/></linearGradient><linearGradient id="ht" x1="0" y1="0" x2="0" y2="1"><stop offset="0" stop-color="#f5f5f5"/><stop offset=".42" stop-color="#e8e8e9"/><stop offset=".5" stop-color="#dbdbdd"/><stop offset="1" stop-color="#c6c6cb"/></linearGradient></defs><rect x="1349" y="0" width="17" height="768" fill="#f0f0f0"/><rect x="1350.5" y="18.5" width="15" height="729" rx="2" fill="url(#vt)" stroke="#929292"/><polygon points="1354,11 1362,11 1358,7" fill="#303030"/><polygon points="1354,755 1362,755 1358,759" fill="#303030"/><rect x="1354" y="379" width="7" height="1" fill="#4a4a4a"/><rect x="1354" y="380" width="7" height="1" fill="#fafafa"/><rect x="1354" y="382" width="7" height="1" fill="#4a4a4a"/><rect x="1354" y="383" width="7" height="1" fill="#fafafa"/><rect x="1354" y="385" width="7" height="1" fill="#4a4a4a"/><rect x="1354" y="386" width="7" height="1" fill="#fafafa"/><rect x="1332" y="62" width="17" height="684" fill="#f0f0f0"/><rect x="1333.5" y="99.5" width="14" height="521" rx="2" fill="url(#vt)" stroke="#929292"/><polygon points="1337,73 1345,73 1341,69" fill="#303030"/><polygon points="1337,735 1345,735 1341,739" fill="#303030"/><rect x="1337" y="355" width="7" height="1" fill="#4a4a4a"/><rect x="1337" y="356" width="7" height="1" fill="#fafafa"/><rect x="1337" y="358" width="7" height="1" fill="#4a4a4a"/><rect x="1337" y="359" width="7" height="1" fill="#fafafa"/><rect x="1337" y="361" width="7" height="1" fill="#4a4a4a"/><rect x="1337" y="362" width="7" height="1" fill="#fafafa"/><rect x="8" y="746" width="1324" height="16" fill="#f0f0f0"/><rect x="145.5" y="746.5" width="1045.5" height="14" rx="2" fill="url(#ht)" stroke="#929292"/><polygon points="18,750 18,758 14,754" fill="#303030"/><polygon points="1321,750 1321,758 1325,754" fill="#303030"/><rect x="664" y="750" width="1" height="7" fill="#4a4a4a"/><rect x="665" y="750" width="1" height="7" fill="#fafafa"/><rect x="667" y="750" width="1" height="7" fill="#4a4a4a"/><rect x="668" y="750" width="1" height="7" fill="#fafafa"/><rect x="670" y="750" width="1" height="7" fill="#4a4a4a"/><rect x="671" y="750" width="1" height="7" fill="#fafafa"/><rect x="1332" y="746" width="17" height="16" fill="#fff"/></svg></body></html>
